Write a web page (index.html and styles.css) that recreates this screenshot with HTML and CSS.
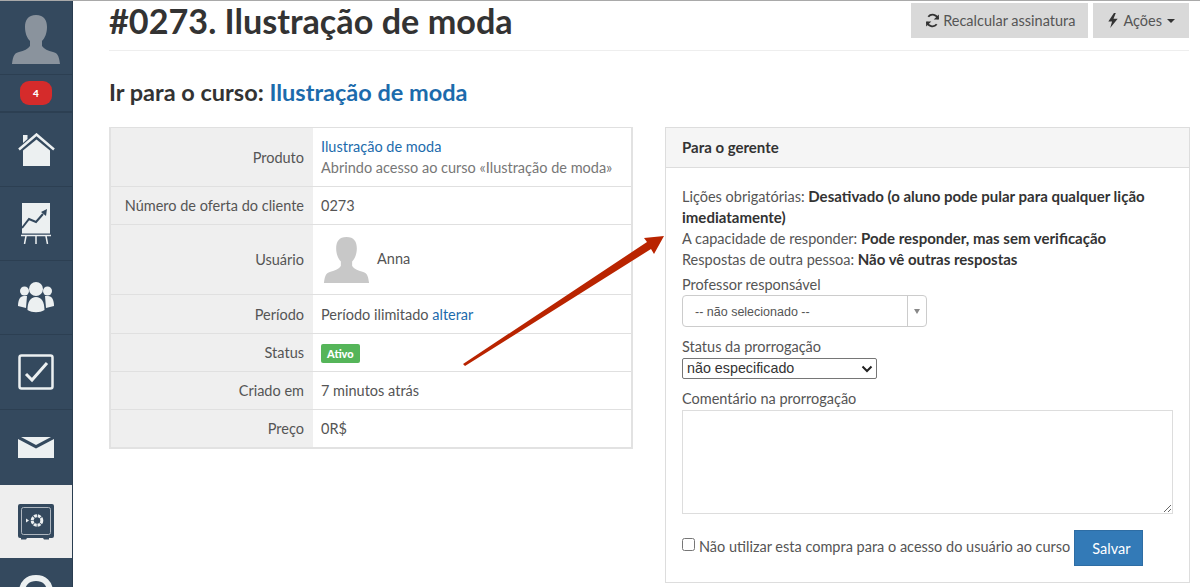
FILE: index.html
```html
<!DOCTYPE html>
<html lang="pt">
<head>
<meta charset="utf-8">
<title>#0273. Ilustração de moda</title>
<link rel="stylesheet" href="styles.css">
</head>
<body>
<div class="app">
  <nav class="side">
    <div class="cell cell-avatar">
      <svg class="ic-avatar" viewBox="0 0 50 50"><path class="sil" d="M25 1c8 0 11 5 11 12 0 6-2 11-5 14v5c2 3 6 5 11 6 4 1 6 3 7 12H1c1-9 3-11 7-12 5-1 9-3 11-6v-5c-3-3-5-8-5-14C14 6 17 1 25 1z"/></svg>
    </div>
    <div class="cell cell-badge"><span class="count">4</span></div>
    <div class="cell cell-home">
      <svg class="ic-home" viewBox="0 0 37 34"><path class="f" d="M5 2h4.500v4L5 10z"/><path class="s" d="M1 16.500 18.500 1.500 36 16.500"/><path class="f" d="M5 17.500 18.500 6.500 32 17.500V33H5z"/></svg>
    </div>
    <div class="cell cell-chart">
      <svg class="ic-chart" viewBox="0 0 30 41"><path class="f" d="M1 0h28v30.500H1z"/><path class="dark" d="M1 25l7-9 7 3 7-8"/><path class="darkf" d="M20 9l6-3-1 7z"/><path class="s2" d="M0 32.500h30M5 33l-1.500 8M15 33v8M25 33l1.500 8"/></svg>
    </div>
    <div class="cell cell-users">
      <svg class="ic-users" viewBox="0 0 36 31"><circle class="f" cx="18" cy="7" r="7"/><circle class="f" cx="6.500" cy="9" r="4.500"/><circle class="f" cx="29.500" cy="9" r="4.500"/><path class="f" d="M0 24c0-6 2-10 6-10h3l-1 12zM36 24c0-6-2-10-6-10h-3l1 12zM9.500 28c0-8 3-13 8.500-13s8.500 5 8.500 13c-5 3-12 3-17 0z"/></svg>
    </div>
    <div class="cell cell-check">
      <svg class="ic" viewBox="0 0 36 36"><rect class="box" x="1.500" y="1.500" width="33" height="33" rx="2"/><path class="tick" d="M8 20l6 6L29 9"/></svg>
    </div>
    <div class="cell cell-mail">
      <svg class="ic-mail" viewBox="0 0 36 21"><path class="f" d="M0 2l18 9.500L36 2v19H0z"/><path class="f" d="M3 0h30L18 8z"/></svg>
    </div>
    <div class="cell cell-safe">
      <svg class="ic" viewBox="0 0 36 36"><path class="safe" d="M2 0h32a2 2 0 0 1 2 2v30a2 2 0 0 1-2 2h-3v1.500h-5l-1-1.500H9l-1 1.500H3V34H2a2 2 0 0 1-2-2V2a2 2 0 0 1 2-2z"/><rect class="safe-line" x="3.500" y="3.500" width="29" height="27" rx="2"/><circle class="safe-wheel" cx="19" cy="16.500" r="4.800"/><path class="safe-dot" d="M8 14.500l3 2-3 2z"/></svg>
    </div>
    <div class="cell cell-more">
      <svg class="ic-more" viewBox="0 0 36 30"><path class="s3" d="M4 28V18C4 9 10 4 18 4s14 5 14 14v10"/></svg>
    </div>
  </nav>
  <main class="main">
    <header class="head">
      <h1>#0273. Ilustração de moda</h1>
      <div class="actions">
        <button class="gbtn"><svg class="ic-sync" viewBox="0 0 16 16"><path d="M14 6.500A6 6 0 0 0 3.500 4M2 9.500A6 6 0 0 0 12.500 12"/><path class="fil" d="M14.800 1.500v5.500H9.300zM1.200 14.500V9h5.500z"/></svg> Recalcular assinatura</button>
        <button class="gbtn gbtn-act"><svg class="ic-bolt" viewBox="0 0 10 16"><path d="M6 0 0 9h4l-2 7 8-10H5.500L8 0z"/></svg> Ações <span class="caret"></span></button>
      </div>
    </header>
    <h2>Ir para o curso: <a href="#">Ilustração de moda</a></h2>
    <div class="cols">
      <table class="info">
        <tr class="r1"><th>Produto</th><td><a href="#">Ilustração de moda</a><br><span class="muted">Abrindo acesso ao curso «Ilustração de moda»</span></td></tr>
        <tr><th>Número de oferta do cliente</th><td>0273</td></tr>
        <tr class="r3"><th>Usuário</th><td><div class="user"><svg class="ic-user" viewBox="0 0 50 50"><path d="M25 1c8 0 11 5 11 12 0 6-2 11-5 14v5c2 3 6 5 11 6 4 1 6 3 7 12H1c1-9 3-11 7-12 5-1 9-3 11-6v-5c-3-3-5-8-5-14C14 6 17 1 25 1z"/></svg><span>Anna</span></div></td></tr>
        <tr class="r4"><th>Período</th><td>Período ilimitado <a href="#">alterar</a></td></tr>
        <tr><th>Status</th><td><span class="tag">Ativo</span></td></tr>
        <tr><th>Criado em</th><td>7 minutos atrás</td></tr>
        <tr><th>Preço</th><td>0R$</td></tr>
      </table>
      <section class="panel">
        <div class="panel-h">Para o gerente</div>
        <div class="panel-b">
          <p>Lições obrigatórias: <b>Desativado (o aluno pode pular para qualquer lição imediatamente)</b></p>
          <p>A capacidade de responder: <b>Pode responder, mas sem verificação</b></p>
          <p>Respostas de outra pessoa: <b>Não vê outras respostas</b></p>
          <label class="lab lab1">Professor responsável</label>
          <div class="combo"><span class="combo-t">-- não selecionado --</span><span class="combo-a"><i></i></span></div>
          <label class="lab lab2">Status da prorrogação</label>
          <select class="sel"><option>não especificado</option></select>
          <label class="lab lab3">Comentário na prorrogação</label>
          <textarea class="ta"></textarea>
          <div class="foot">
            <label class="chk"><input type="checkbox"><span>Não utilizar esta compra para o acesso do usuário ao curso</span></label>
            <button class="save">Salvar</button>
          </div>
        </div>
      </section>
    </div>
  </main>
</div>
<svg class="arrow" viewBox="0 0 210 140"><path d="M3 132 187 10 184 6 204 4 194 22 191 17 5 134z"/></svg>
</body>
</html>
```
FILE: styles.css
```css
* { box-sizing: border-box; }
html, body { margin: 0; height: 587px; overflow: hidden; }
body { font-family: Lato, "Liberation Sans", sans-serif; font-size: 14.500px; color: #333; background: #fff; border-top: 1px solid #a9a9a9; position: relative; }
a { color: #1c6bac; text-decoration: none; }
.app { display: flex; height: 586px; overflow: hidden; }
.side { width: 73px; flex: none; background: #34495e; border-right: 1px solid #2a3d50; display: flex; flex-direction: column; overflow: hidden; }
.cell { display: flex; align-items: center; justify-content: center; flex: none; border-bottom: 1px solid #2c3f52; }
.cell-avatar { height: 74px; }
.cell-badge { height: 38px; border-bottom-width: 2px; }
.cell-home, .cell-chart, .cell-users { height: 74px; }
.cell-check { height: 75px; }
.cell-mail { height: 75px; border-bottom: 0; }
.cell-safe { height: 73px; background: #eee; border-bottom: 0; width: 72px; }
.cell-more { height: 40px; align-items: flex-start; padding-top: 16px; border-bottom: 0; }
.ic-avatar { width: 50px; height: 50px; margin-top: 3px; }
.sil { fill: #8a939d; }
.count { width: 32px; height: 24px; border-radius: 9px; background: #d52b2b; color: #fff; font-size: 10px; font-weight: 900; display: flex; align-items: center; justify-content: center; }
.ic { width: 36px; height: 36px; display: block; }
.ic-home { width: 37px; height: 34px; display: block; }
.ic-chart { width: 30px; height: 41px; display: block; }
.ic-users { width: 36px; height: 31px; display: block; }
.ic-mail { width: 36px; height: 21px; display: block; }
.ic-more { width: 36px; height: 30px; display: block; }
.f { fill: #ecf0f1; }
.s { fill: none; stroke: #ecf0f1; stroke-width: 2.500; }
.s2 { fill: none; stroke: #ecf0f1; stroke-width: 1.500; }
.s3 { fill: none; stroke: #ecf0f1; stroke-width: 6; }
.dark { fill: none; stroke: #34495e; stroke-width: 2; }
.darkf { fill: #34495e; }
.box { fill: none; stroke: #ecf0f1; stroke-width: 2.500; }
.tick { fill: none; stroke: #ecf0f1; stroke-width: 3; }
.safe { fill: #34495e; }
.safe-line { fill: none; stroke: #aeb6bf; stroke-width: 1; }
.safe-wheel { fill: #34495e; stroke: #ecf0f1; stroke-width: 3; stroke-dasharray: 3 .8; }
.safe-dot { fill: #ecf0f1; }
.main { flex: none; width: 1080px; margin-left: 36px; }
.head { height: 50px; display: flex; justify-content: space-between; border-bottom: 1px solid #eee; }
h1 { margin: 0; font-size: 34.200px; line-height: 40px; font-weight: 700; color: #333; white-space: nowrap; }
.actions { display: flex; gap: 5px; padding-top: 2px; height: 37px; box-sizing: content-box; }
.gbtn { height: 35px; border: 0; background: #d9d9d9; color: #555; font: inherit; padding: 0 13px 0 14px; display: flex; align-items: center; gap: 3px; white-space: nowrap; }
.gbtn-act { padding: 0 14px 0 15px; gap: 5px; }
.ic-sync { width: 15px; height: 15px; fill: none; stroke: #333; stroke-width: 2; }
.ic-sync .fil { fill: #333; stroke: none; }
.ic-bolt { width: 10px; height: 15px; fill: #333; }
.caret { border-top: 4px solid #333; border-left: 4px solid transparent; border-right: 4px solid transparent; }
h2 { margin: 28px 0 21px; font-size: 23.500px; line-height: 27px; font-weight: 700; color: #333; white-space: nowrap; }
.cols { display: flex; align-items: flex-start; gap: 32px; }
.info { width: 524px; border-collapse: collapse; border: 2px solid #e2e2e2; border-top-width: 1px; flex: none; }
.info th, .info td { border-top: 1px solid #e0e0e0; border-bottom: 1px solid #e0e0e0; height: 38px; padding: 0 8px; font-weight: 400; line-height: 21px; white-space: nowrap; }
.info th { width: 203px; text-align: right; background: #efefef; color: #555; padding-right: 9px; }
.info td { color: #555; }
.info .r1 th, .info .r1 td { height: 59px; }
.info .r3 th, .info .r3 td { height: 70px; }
.info .r4 th, .info .r4 td { height: 39px; }
.muted { color: #777; }
.user { display: flex; align-items: center; gap: 7px; color: #555; padding-left: 2px; }
.user span { margin-bottom: 3px; }
.ic-user { width: 47px; height: 47px; fill: #c8c8c8; display: block; }
.tag { display: inline-block; background: #55b559; color: #fff; font-size: 11px; font-weight: 900; border-radius: 2px; padding: 0 6px; line-height: 19px; vertical-align: middle; }
.panel { width: 525px; height: 456px; border: 1px solid #ddd; flex: none; }
.panel-h { height: 40px; background: #f5f5f5; border-bottom: 1px solid #ddd; padding: 0 16px 1px; display: flex; align-items: center; font-weight: 700; font-size: 15px; }
.panel-b { padding: 17.500px 16px 0; color: #555; line-height: 21px; }
.panel-b p { margin: 0; }
.panel-b b { color: #333; font-size: 15px; }
.lab { display: block; }
.lab1 { margin-top: 4.500px; }
.combo { width: 245px; height: 32px; border: 1px solid #ccc; border-radius: 4px; display: flex; align-items: center; font-family: "Liberation Sans", sans-serif; font-size: 12.500px; }
.combo-t { flex: 1; padding: 2px 0 0 12px; color: #555; }
.combo-a { width: 19px; height: 100%; border-left: 1px solid #ccc; display: flex; align-items: center; justify-content: center; }
.combo-a i { border-top: 5px solid #888; border-left: 3px solid transparent; border-right: 3px solid transparent; }
.lab2 { margin-top: 9px; }
.sel { display: block; width: 195px; height: 21px; margin-top: 1px; padding: 0 4px 1px; font-family: "Liberation Sans", sans-serif; font-size: 14.300px; border: 1px solid #767676; border-radius: 2px; color: #333; appearance: none; background: #fff url("data:image/svg+xml,%3Csvg xmlns='http://www.w3.org/2000/svg' width='12' height='8'%3E%3Cpath d='M1.500 1.500 6 6l4.500-4.500' fill='none' stroke='%23222' stroke-width='2'/%3E%3C/svg%3E") no-repeat right 3px center; }
.lab3 { margin-top: 9px; }
.ta { display: block; width: 491px; height: 104px; border: 1px solid #ddd; margin-top: 1px; }
.foot { display: flex; align-items: flex-start; margin-top: 16px; gap: 4px; }
.chk { display: flex; align-items: flex-start; gap: 4px; white-space: nowrap; margin-top: 6px; line-height: 21px; }
.chk input { margin: 2px 0 0; width: 13px; height: 13px; flex: none; }
.save { width: 69px; height: 36px; padding: 0 0 0 5px; background: #337ab7; border: 1px solid #2e6da4; color: #fff; font: inherit; font-size: 14.500px; }
.arrow { position: absolute; left: 460px; top: 231px; width: 210px; height: 140px; }
.arrow path { fill: #b92400; }
```
